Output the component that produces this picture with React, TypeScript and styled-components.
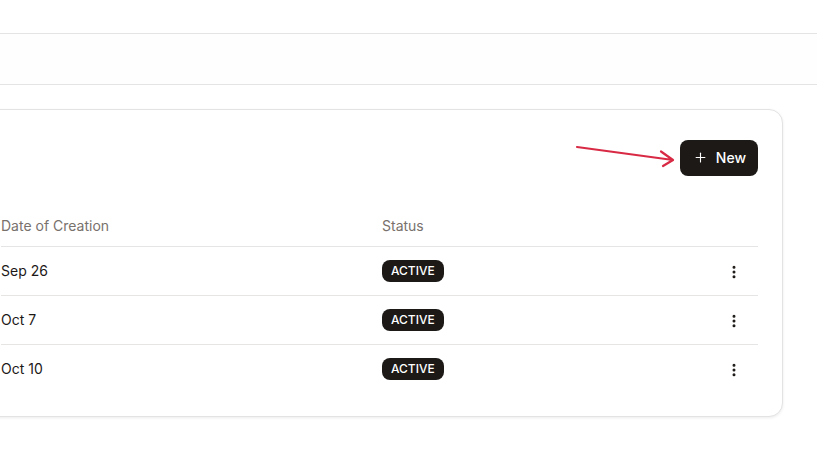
import React from 'react';
import styled, { createGlobalStyle } from 'styled-components';
import { Plus, EllipsisVertical } from 'lucide-react';

const rows = [
  { date: 'Sep 26', status: 'ACTIVE' },
  { date: 'Oct 7', status: 'ACTIVE' },
  { date: 'Oct 10', status: 'ACTIVE' },
];

function App() {
  return (
    <>
      <GlobalStyle />
      <Page>
        <TopBar />
        <SubBar />
        <Main>
          <Card>
            <Toolbar>
              <Arrow width="110" height="30" viewBox="0 0 110 30" aria-hidden="true">
                <path
                  d="M2 3 L98 16 M86 7.5 L98 16 L88 22"
                  fill="none"
                  stroke="#d82a44"
                  strokeWidth="2.2"
                  strokeLinecap="round"
                  strokeLinejoin="round"
                />
              </Arrow>
              <NewButton type="button">
                <Plus size={15} strokeWidth={1.75} />
                New
              </NewButton>
            </Toolbar>
            <Table>
              <thead>
                <tr>
                  <Th>Date of Creation</Th>
                  <Th>Status</Th>
                  <Th />
                </tr>
              </thead>
              <tbody>
                {rows.map((row, i) => (
                  <Tr key={row.date} $last={i === rows.length - 1}>
                    <Td>{row.date}</Td>
                    <Td>
                      <Badge>{row.status}</Badge>
                    </Td>
                    <ActionTd>
                      <Kebab type="button" aria-label="More">
                        <EllipsisVertical size={16} strokeWidth={2.5} />
                      </Kebab>
                    </ActionTd>
                  </Tr>
                ))}
              </tbody>
            </Table>
          </Card>
        </Main>
      </Page>
    </>
  );
}

export default App;

const GlobalStyle = createGlobalStyle`
  html, body {
    margin: 0;
    padding: 0;
    background: #ffffff;
    font-family: Inter, "Noto Sans", sans-serif;
    color: #1c1917;
    overflow: hidden;
  }
`;

const Page = styled.div`
  width: 817px;
  height: 458px;
  display: flex;
  flex-direction: column;
`;

const TopBar = styled.div`
  height: 33px;
  border-bottom: 1px solid #e4e4e4;
  background: #ffffff;
`;

const SubBar = styled.div`
  height: 50px;
  border-bottom: 1px solid #e4e4e4;
  background: #fefefe;
`;

const Main = styled.main`
  padding-top: 24px;
  padding-right: 34px;
  display: flex;
`;

const Card = styled.section`
  flex: 1;
  margin-left: -24px;
  padding: 30px 24px 23px;
  background: #ffffff;
  border: 1px solid #e3e3e3;
  border-radius: 14px;
  box-shadow: 0 1px 3px rgba(0, 0, 0, 0.08);
`;

const Toolbar = styled.div`
  position: relative;
  display: flex;
  justify-content: flex-end;
  margin-bottom: 30px;
`;

const Arrow = styled.svg`
  position: absolute;
  right: 73px;
  top: 4px;
`;

const NewButton = styled.button`
  display: flex;
  align-items: center;
  gap: 8px;
  height: 36px;
  padding: 0 12px 1px 13px;
  border: none;
  border-radius: 8px;
  background: #1c1917;
  color: #ffffff;
  font-family: Inter, sans-serif;
  font-size: 14px;
  font-weight: 500;
  cursor: pointer;
`;

const Table = styled.table`
  width: 100%;
  border-collapse: collapse;
  font-size: 14px;
`;

const Th = styled.th`
  height: 39px;
  padding: 0 0 1px;
  text-align: left;
  font-weight: 400;
  color: #78716c;
  border-bottom: 1px solid #e7e5e4;
  &:first-child {
    width: 381px;
  }
`;

const Tr = styled.tr<{ $last?: boolean }>`
  border-bottom: ${(p) => (p.$last ? 'none' : '1px solid #e7e5e4')};
`;

const Td = styled.td`
  height: 47px;
  padding: 0 0 1px;
  vertical-align: middle;
`;

const ActionTd = styled(Td)`
  text-align: right;
  padding-right: 16px;
`;

const Badge = styled.span`
  display: inline-flex;
  align-items: center;
  height: 22px;
  padding: 0 9px;
  border-radius: 8px;
  background: #1c1917;
  color: #ffffff;
  font-size: 12px;
  font-weight: 500;
`;

const Kebab = styled.button`
  display: inline-flex;
  padding: 0;
  border: none;
  background: none;
  color: #1c1917;
  vertical-align: middle;
`;
